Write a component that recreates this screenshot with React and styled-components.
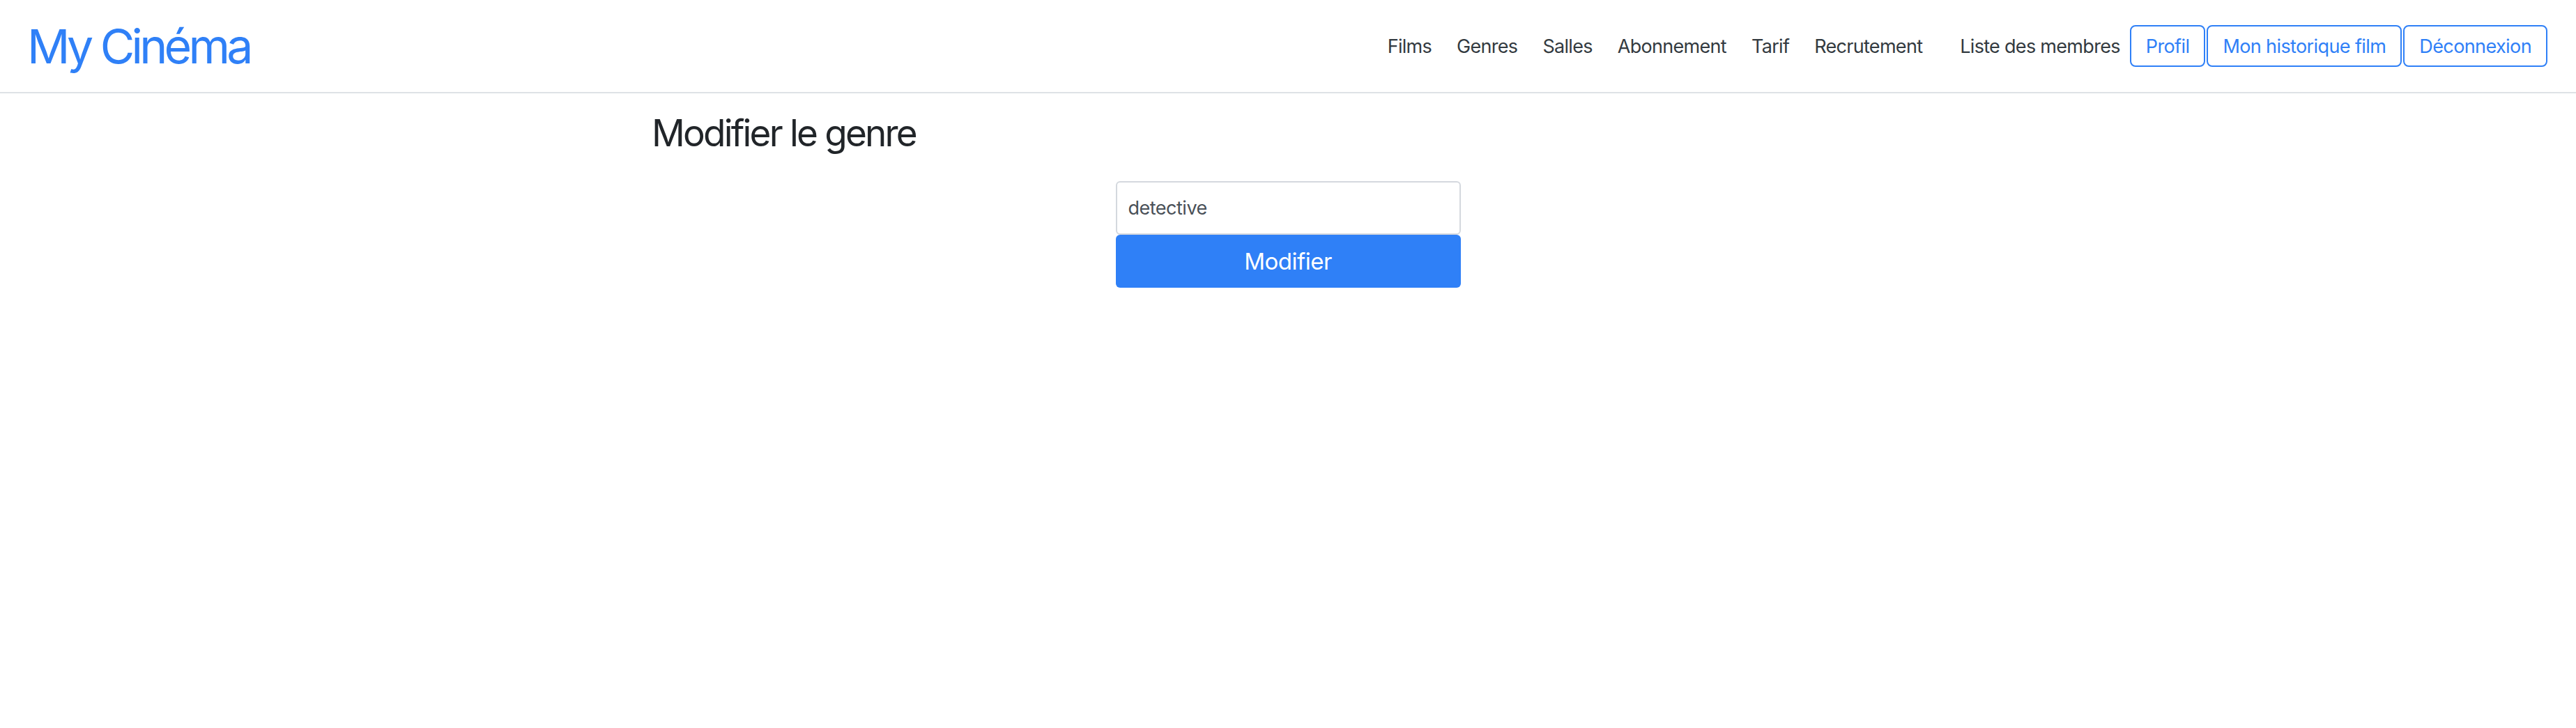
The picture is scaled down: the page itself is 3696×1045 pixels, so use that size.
import React, { useState } from 'react';
import styled, { createGlobalStyle } from 'styled-components';

const GlobalStyle = createGlobalStyle`
  *, *::before, *::after {
    box-sizing: border-box;
  }
  body {
    margin: 0;
    background: #ffffff;
    font-family: Inter, "Noto Sans", "Liberation Sans", sans-serif;
    color: #212529;
  }
`;

const Navbar = styled.nav`
  display: flex;
  align-items: center;
  justify-content: space-between;
  height: 134px;
  padding: 0 41px 0 39px;
  border-bottom: 2px solid #dee2e6;
`;

const Brand = styled.a`
  font-size: 68px;
  line-height: 1;
  letter-spacing: -4.8px;
  color: #2f80f7;
  text-decoration: none;
  cursor: pointer;
`;

const NavRight = styled.div`
  display: flex;
  align-items: center;
`;

const NavLink = styled.a`
  font-size: 27px;
  letter-spacing: -0.7px;
  color: #333a40;
  text-decoration: none;
  padding: ${(p) => p.$pad || '0 18px'};
  cursor: pointer;
  &:hover {
    color: #000;
  }
`;

const ButtonGroup = styled.div`
  display: flex;
  gap: 2px;
`;

const OutlineButton = styled.button`
  height: 60px;
  padding: 0 21px;
  font-family: inherit;
  font-size: 27px;
  letter-spacing: -0.6px;
  color: #2f80f7;
  background: #fff;
  border: 2px solid #2f80f7;
  border-radius: 8px;
  cursor: pointer;
  &:hover {
    background: #2f80f7;
    color: #fff;
  }
`;

const Container = styled.main`
  width: 1826px;
  margin: 0 auto;
  padding-top: 26px;
`;

const Title = styled.h2`
  margin: 0;
  font-size: 53px;
  font-weight: 400;
  line-height: 1.2;
  letter-spacing: -2.8px;
  color: #212529;
`;

const EditForm = styled.form`
  display: flex;
  flex-direction: column;
  width: 495px;
  margin: 36px auto 0;
`;

const TextInput = styled.input`
  height: 77px;
  padding: 0 16px;
  font-family: inherit;
  font-size: 27px;
  letter-spacing: -0.5px;
  color: #495057;
  border: 2px solid #d4d8de;
  border-radius: 6px;
  outline: none;
`;

const SubmitButton = styled.button`
  height: 76px;
  font-family: inherit;
  font-size: 33px;
  letter-spacing: -0.5px;
  color: #fff;
  background: #2f80f7;
  border: none;
  border-radius: 6px;
  cursor: pointer;
  &:hover {
    background: #1f6fe6;
  }
`;

const links = ['Films', 'Genres', 'Salles', 'Abonnement', 'Tarif', 'Recrutement'];

const App = () => {
  const [genre, setGenre] = useState('detective');

  const handleSubmit = (e) => {
    e.preventDefault();
  };

  return (
    <>
      <GlobalStyle />
      <Navbar>
        <Brand>My Cinéma</Brand>
        <NavRight>
          {links.map((l) => (
            <NavLink key={l}>{l}</NavLink>
          ))}
          <NavLink $pad="0 14px 0 36px">Liste des membres</NavLink>
          <ButtonGroup>
            <OutlineButton>Profil</OutlineButton>
            <OutlineButton>Mon historique film</OutlineButton>
            <OutlineButton>Déconnexion</OutlineButton>
          </ButtonGroup>
        </NavRight>
      </Navbar>
      <Container>
        <Title>Modifier le genre</Title>
        <EditForm onSubmit={handleSubmit}>
          <TextInput
            type="text"
            value={genre}
            onChange={(e) => setGenre(e.target.value)}
          />
          <SubmitButton type="submit">Modifier</SubmitButton>
        </EditForm>
      </Container>
    </>
  );
};

export default App;
